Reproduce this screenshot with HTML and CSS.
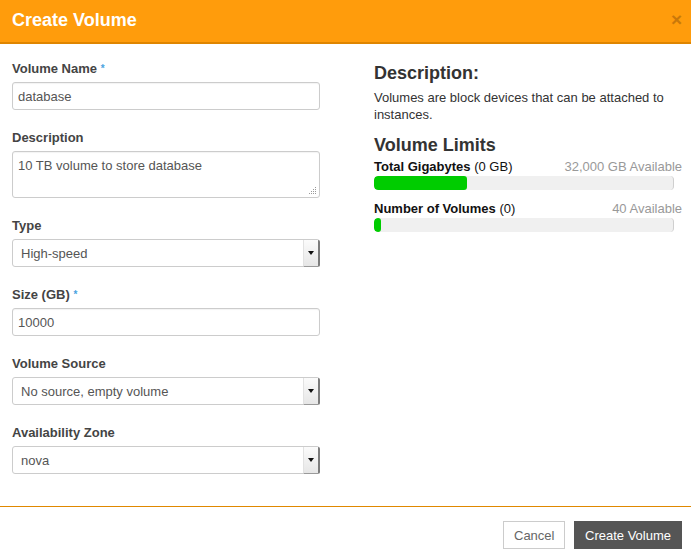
FILE: index.html
```html
<!DOCTYPE html>
<html lang="en">
<head>
<meta charset="utf-8">
<title>Create Volume</title>
<link rel="stylesheet" href="styles.css">
</head>
<body>
<div class="modal">
  <div class="modal-header">
    <h2 class="modal-title">Create Volume</h2>
    <span class="close">&times;</span>
  </div>
  <div class="modal-body">
    <div class="form-col">
      <div class="group">
        <label class="label">Volume Name <span class="req">*</span></label>
        <input class="control" type="text" value="database">
      </div>
      <div class="group">
        <label class="label">Description</label>
        <div class="ta-wrap">
          <textarea class="control textarea">10 TB volume to store database</textarea>
          <svg class="grip" width="8" height="8" viewBox="0 0 8 8"><g fill="#9a9a9a"><rect x="6" y="0" width="1" height="1"/><rect x="4" y="2" width="1" height="1"/><rect x="6" y="2" width="1" height="1"/><rect x="2" y="4" width="1" height="1"/><rect x="4" y="4" width="1" height="1"/><rect x="6" y="4" width="1" height="1"/><rect x="0" y="6" width="1" height="1"/><rect x="2" y="6" width="1" height="1"/><rect x="4" y="6" width="1" height="1"/><rect x="6" y="6" width="1" height="1"/></g></svg>
        </div>
      </div>
      <div class="group">
        <label class="label">Type</label>
        <div class="select"><span class="select-text">High-speed</span><span class="select-arrow"></span></div>
      </div>
      <div class="group">
        <label class="label">Size (GB) <span class="req">*</span></label>
        <input class="control" type="text" value="10000">
      </div>
      <div class="group">
        <label class="label">Volume Source</label>
        <div class="select"><span class="select-text">No source, empty volume</span><span class="select-arrow"></span></div>
      </div>
      <div class="group">
        <label class="label">Availability Zone</label>
        <div class="select"><span class="select-text">nova</span><span class="select-arrow"></span></div>
      </div>
    </div>
    <div class="info-col">
      <h3 class="heading">Description:</h3>
      <p class="text">Volumes are block devices that can be attached to instances.</p>
      <h3 class="heading heading-limits">Volume Limits</h3>
      <div class="quota-row"><span><strong>Total Gigabytes</strong> (0 GB)</span><span class="avail">32,000 GB Available</span></div>
      <div class="bar"><div class="fill" style="width:31%"></div></div>
      <div class="quota-row"><span><strong>Number of Volumes</strong> (0)</span><span class="avail">40 Available</span></div>
      <div class="bar"><div class="fill" style="width:7px"></div></div>
    </div>
  </div>
  <div class="modal-footer">
    <button class="btn btn-cancel">Cancel</button>
    <button class="btn btn-primary">Create Volume</button>
  </div>
</div>
</body>
</html>
```
FILE: styles.css
```css
* { box-sizing: border-box; }
html, body { margin: 0; padding: 0; background: #fff; }
body { font-family: "Liberation Sans", Arial, sans-serif; font-size: 13px; color: #333; }

.modal { width: 691px; height: 557px; display: flex; flex-direction: column; }

.modal-header {
  height: 44px;
  background: #ff9c0c;
  border-bottom: 2px solid #df8500;
  display: flex;
  align-items: center;
  justify-content: space-between;
  padding: 0 9px 0 12px;
}
.modal-title { margin: 0; color: #fff; font-size: 18px; font-weight: bold; line-height: 20px; padding-bottom: 2px; }
.close { color: #c9780a; font-size: 19px; font-weight: bold; line-height: 20px; padding-bottom: 3px; }

.modal-body {
  flex: 1;
  display: flex;
  gap: 54px;
  padding: 16px 9px 0 12px;
}
.form-col { width: 308px; display: flex; flex-direction: column; }
.group { display: flex; flex-direction: column; margin-bottom: 19px; }
.label { font-weight: bold; color: #444; line-height: 18px; margin-bottom: 4px; }
.req { color: #4aa3df; font-size: 10px; vertical-align: top; font-weight: bold; }

.control {
  height: 28px;
  border: 1px solid #ccc;
  border-radius: 3px;
  padding: 0 5px;
  font-family: "Liberation Sans", Arial, sans-serif;
  font-size: 13px;
  color: #555;
  background: #fff;
  box-shadow: inset 0 1px 1px rgba(0,0,0,0.05);
  width: 100%;
}
.ta-wrap { position: relative; }
.textarea { height: 47px; resize: none; padding: 6px 5px; display: block; line-height: 16px; }
.grip { position: absolute; right: 3px; bottom: 3px; }

.select {
  position: relative;
  height: 28px;
  border: 1px solid #ccc;
  border-radius: 3px;
  background: #fff;
  display: flex;
  align-items: center;
  padding-left: 8px;
  color: #555;
}
.select-arrow {
  position: absolute;
  top: 0;
  right: -1px;
  bottom: -1px;
  width: 17px;
  background: linear-gradient(#fbfbfb, #e6e6e6);
  border-left: 1px solid #e2e2e2;
  border-right: 2px solid #7c7c7c;
  border-bottom: 1px solid #9a9a9a;
  border-radius: 0 2px 2px 0;
}
.select-arrow::after {
  content: "";
  position: absolute;
  left: 4px;
  top: 11px;
  border-left: 3px solid transparent;
  border-right: 3px solid transparent;
  border-top: 4px solid #111;
}

.info-col { width: 308px; padding-top: 1px; }
.heading { margin: 0; font-size: 18px; font-weight: bold; line-height: 24px; color: #333; }
.text { margin: 4px 0 0; line-height: 17px; color: #333; }
.heading-limits { margin-top: 10px; margin-bottom: 1px; }
.quota-row { display: flex; justify-content: space-between; line-height: 18px; color: #111; }
.quota-row strong { color: #111; }
.avail { color: #999; }
.bar {
  width: 300px;
  height: 14px;
  background: #f0f0f0;
  border-right: 1px solid #cfcfcf;
  border-radius: 4px;
  margin-bottom: 10px;
  overflow: hidden;
}
.fill { height: 100%; background: #00cc00; border-radius: 4px 3px 3px 4px; }

.modal-footer {
  height: 51px;
  border-top: 1px solid #e08800;
  display: flex;
  justify-content: flex-end;
  align-items: flex-start;
  gap: 9px;
  padding: 14px 9px 0 0;
}
.btn {
  height: 28px;
  font-family: "Liberation Sans", Arial, sans-serif;
  font-size: 13px;
  border-radius: 0;
  padding: 0 10px;
  cursor: pointer;
}
.btn-cancel { width: 62px; background: #fff; border: 1px solid #ccc; color: #666; }
.btn-primary { width: 108px; background: #555; border: 1px solid #555; color: #fff; }
```
